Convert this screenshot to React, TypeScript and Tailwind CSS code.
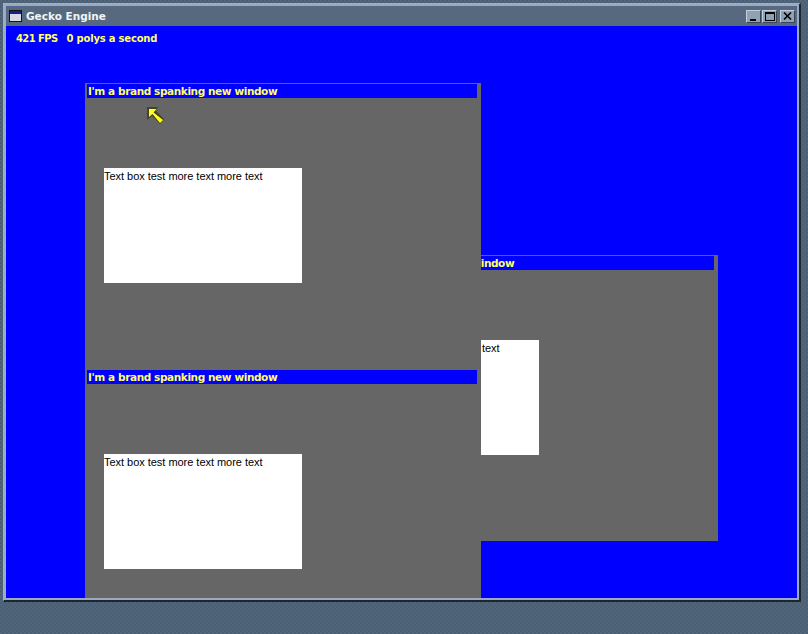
function GeckoWindow({ left, top, title }: { left: string; top: string; title: string }) {
  return (
    <div className={`absolute ${left} ${top} h-[286px] w-[396px] bg-[#666666] bg-[repeating-conic-gradient(#646464_0_25%,#686868_0_50%)] bg-[length:2px_2px]`}>
      <div className="ml-[2px] mt-[1px] flex h-[14px] w-[390px] items-center bg-[#0000ff] pl-[1px] pt-[1px] font-['DejaVu_Sans',sans-serif] text-[10.5px] font-bold tracking-[-0.4px] whitespace-nowrap text-[#ffff66]">
        {title}
      </div>
      <div className="ml-[19px] mt-[70px] h-[115px] w-[198px] overflow-hidden bg-white font-['Liberation_Sans',sans-serif] text-[11px] leading-[16px] tracking-[-0.03px] whitespace-nowrap text-black">
        Text box test more text more text
      </div>
    </div>
  );
}

export default function App() {
  return (
    <div className="h-[634px] w-[808px] overflow-hidden bg-[#4e6377] bg-[repeating-conic-gradient(#4a5f73_0_25%,#52677b_0_50%)] bg-[length:4px_4px] pt-[3px] pl-[3px]">
      {/* outer win32 frame */}
      <div className="flex h-[599px] w-[798px] flex-col border-t border-l border-b-2 border-r-2 border-t-[#9fb0c4] border-l-[#9fb0c4] border-b-[#1c2530] border-r-[#1c2530] bg-[#9aa9c4] p-[2px]">
        <div className="flex h-[20px] shrink-0 items-center bg-[#56697f] pl-[3px] pr-[2px]">
          <svg width="13" height="12" viewBox="0 0 13 12" className="shrink-0">
            <rect x="0" y="0" width="13" height="12" fill="#10151c" />
            <rect x="1" y="1" width="11" height="3" fill="#1c1c8c" />
            <rect x="1" y="4" width="11" height="7" fill="#d8dce2" />
          </svg>
          <span className="ml-[4px] mt-[1px] font-['DejaVu_Sans',sans-serif] text-[10.5px] font-bold text-[#f2f4f6]">
            Gecko Engine
          </span>
          <div className="ml-auto flex items-center">
            <button className="relative h-[13px] w-[15px] border border-t-[#c4cfdc] border-l-[#c4cfdc] border-r-[#3a4656] border-b-[#3a4656] bg-[#8fa1b5]">
              <span className="absolute bottom-[1px] left-[3px] h-[2px] w-[6px] bg-black" />
            </button>
            <button className="ml-[1px] flex h-[13px] w-[15px] items-center justify-center border border-t-[#c4cfdc] border-l-[#c4cfdc] border-r-[#3a4656] border-b-[#3a4656] bg-[#8fa1b5]">
              <span className="block h-[9px] w-[10px] border border-t-2 border-black" />
            </button>
            <button className="ml-[3px] flex h-[13px] w-[15px] items-center justify-center border border-t-[#c4cfdc] border-l-[#c4cfdc] border-r-[#3a4656] border-b-[#3a4656] bg-[#8fa1b5]">
              <svg width="9" height="8" viewBox="0 0 9 8">
                <path d="M1 0.5 L8 7.5 M8 0.5 L1 7.5" stroke="#000" strokeWidth="1.6" fill="none" />
              </svg>
            </button>
          </div>
        </div>

        {/* engine viewport, everything inside is placed on a free canvas */}
        <div className="relative flex-1 overflow-hidden bg-[#0000ff]">
          <div className="absolute top-[5px] left-[10px] flex gap-[9px] font-['DejaVu_Sans',sans-serif] text-[10px] font-bold tracking-[-0.2px] whitespace-nowrap text-[#ffff66]">
            <span className="tracking-[-0.6px]">421 FPS</span>
            <span>0 polys a second</span>
          </div>

          <GeckoWindow left="left-[316px]" top="top-[229px]" title="I'm a brand spanking new window" />
          <GeckoWindow left="left-[79px]" top="top-[57px]" title="I'm a brand spanking new window" />
          <GeckoWindow left="left-[79px]" top="top-[343px]" title="I'm a brand spanking new window" />

          {/* cursor */}
          <svg width="18" height="18" viewBox="0 0 18 18" className="absolute top-[81px] left-[141px]">
            <path d="M0 0 H11 L9 4 L17 12 L13 17 L5 9 L0 13 Z" fill="#45451f" />
            <path d="M2 2 H9.5 L6.5 5.5 L16 13 L13 16 L5.5 7 L2 10 Z" fill="#ffff22" />
          </svg>
        </div>
      </div>
    </div>
  );
}
